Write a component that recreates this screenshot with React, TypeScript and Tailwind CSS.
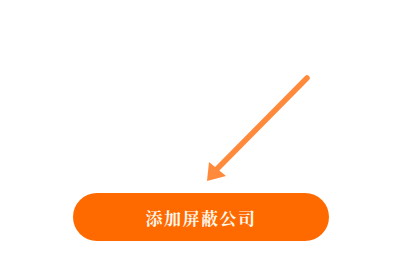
export default function App() {
  return (
    <div className="w-[400px] h-[255px] bg-white flex flex-col">
      <svg width="400" height="193" viewBox="0 0 400 193" className="block">
        <line x1="307" y1="78" x2="214" y2="172" stroke="#ff8a3c" strokeWidth="5.5" strokeLinecap="round" />
        <polygon points="207,181 209,162 226,176" fill="#ff8a3c" />
      </svg>
      <div className="ml-[73px] w-[256px] h-[48px] rounded-full bg-[#ff6a00] flex items-center justify-center">
        <span
          className="text-[17px] text-[#fff8ee] font-bold tracking-[1.5px] leading-none"
          style={{ fontFamily: '"Noto Serif CJK SC", "Noto Sans CJK SC", serif' }}
        >
          添加屏蔽公司
        </span>
      </div>
    </div>
  );
}
